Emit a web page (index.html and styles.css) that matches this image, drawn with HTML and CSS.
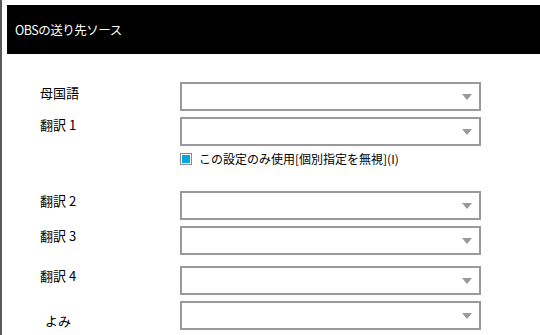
FILE: index.html
```html
<!DOCTYPE html>
<html lang="ja">
<head>
<meta charset="utf-8">
<link rel="stylesheet" href="styles.css">
</head>
<body>
<div class="frame">
  <div class="edge"></div>
  <div class="main">
    <header class="title-bar"><span class="title">OBSの送り先ソース</span></header>
    <div class="form">
      <div class="row row-1">
        <label class="label l-1">母国語</label>
        <div class="select"><span class="arrow"></span></div>
      </div>
      <div class="row row-2">
        <label class="label l-2">翻訳 1</label>
        <div class="select"><span class="arrow"></span></div>
      </div>
      <div class="check-row">
        <span class="checkbox"></span>
        <span class="check-text">この設定のみ使用[個別指定を無視](I)</span>
      </div>
      <div class="row row-3">
        <label class="label l-3">翻訳 2</label>
        <div class="select"><span class="arrow"></span></div>
      </div>
      <div class="row row-4">
        <label class="label l-4">翻訳 3</label>
        <div class="select"><span class="arrow"></span></div>
      </div>
      <div class="row row-5">
        <label class="label l-5">翻訳 4</label>
        <div class="select"><span class="arrow"></span></div>
      </div>
      <div class="row row-6">
        <label class="label l-6">よみ</label>
        <div class="select"><span class="arrow"></span></div>
      </div>
    </div>
  </div>
</div>
</body>
</html>
```
FILE: styles.css
```css
html, body {
  margin: 0;
  padding: 0;
  background: #ffffff;
  width: 540px;
  height: 335px;
  overflow: hidden;
  font-family: "Noto Sans CJK JP", "Noto Sans", sans-serif;
  color: #000;
}
.frame {
  display: flex;
  height: 335px;
}
.edge {
  width: 2px;
  flex: 0 0 2px;
  background: #5a5a5a;
}
.main {
  flex: 1;
  padding-left: 5px;
  padding-top: 5px;
}
.title-bar {
  height: 49px;
  background: #000;
  display: flex;
  align-items: center;
  padding-left: 8px;
}
.title {
  color: #fff;
  font-size: 12.5px;
  line-height: 16px;
  letter-spacing: -0.5px;
}
.form {
  display: flex;
  flex-direction: column;
  padding-left: 33px;
}
.row {
  display: flex;
  align-items: flex-start;
}
.label {
  width: 140px;
  font-size: 13px;
  line-height: 16px;
}
.select {
  position: relative;
  width: 297px;
  height: 25px;
  border: 2px solid #999999;
  background: #fff;
}
.arrow {
  position: absolute;
  right: 7px;
  top: 10px;
  width: 0;
  height: 0;
  border-left: 5.5px solid transparent;
  border-right: 5.5px solid transparent;
  border-top: 6px solid #999999;
}
.row-1 { margin-top: 28px; }
.row-2 { margin-top: 6px; }
.row-3 { margin-top: 26px; }
.row-4 { margin-top: 6px; }
.row-5 { margin-top: 11px; }
.row-6 { margin-top: 6px; }
.l-1 { margin-top: 3px; }
.l-2 { margin-top: 0; }
.l-3 { margin-top: 2px; }
.l-4 { margin-top: 2px; }
.l-5 { margin-top: 2px; }
.l-6 { margin-top: 12px; padding-left: 5px; width: 135px; }
.check-row {
  display: flex;
  align-items: center;
  margin-top: 7px;
  margin-left: 140px;
  height: 12px;
}
.checkbox {
  box-sizing: border-box;
  width: 12px;
  height: 12px;
  border: 1px solid #8a8a8a;
  padding: 1px;
  background: #00a6dc;
  background-clip: content-box;
}
.check-text {
  margin-left: 7px;
  font-size: 12px;
  line-height: 14px;
  letter-spacing: 0;
}
```
